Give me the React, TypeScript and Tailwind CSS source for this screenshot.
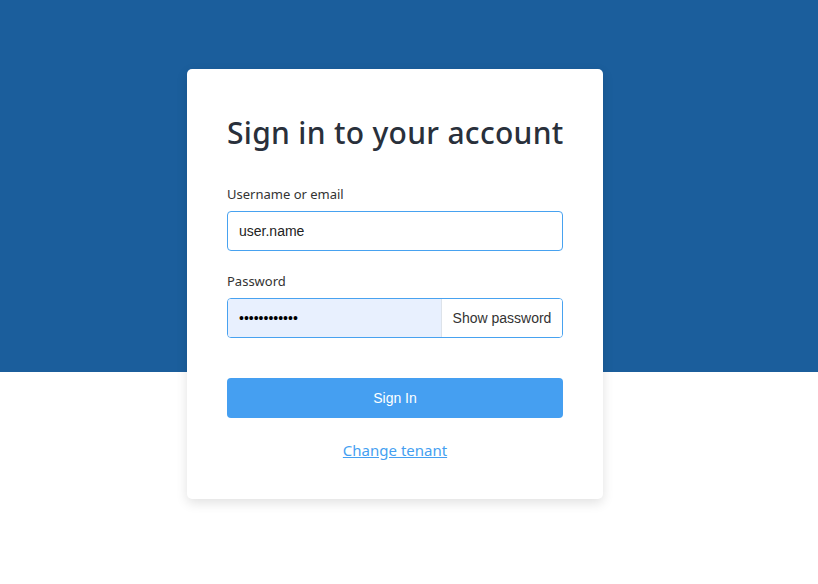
// Login page - tenant sign in
export default function App() {
  return (
    <div className="min-h-[584px] w-full bg-[linear-gradient(to_bottom,#1b5e9c_372px,#ffffff_372px)] pt-[69px]">
      <div className="ml-[187px] w-[416px] rounded-[5px] bg-white px-10 pt-10 pb-[37px] shadow-[0_4px_12px_rgba(0,0,0,0.12)]">
        <h1 className="whitespace-nowrap font-['Noto_Sans',sans-serif] text-[30px] leading-[48px] font-medium text-[#29303b] tracking-[0.3px]">
          Sign in to your account
        </h1>

        <form className="mt-[27px] flex flex-col">
          <label className="font-['Noto_Sans',sans-serif] text-[13px] leading-5 text-[#333]">
            Username or email
          </label>
          <input
            defaultValue="user.name"
            className="mt-[7px] h-10 w-full rounded-[4px] border border-[#48a2f0] bg-white px-[11px] font-['Liberation_Sans',sans-serif] text-[14px] text-[#222] outline-none"
          />

          <label className="mt-5 font-['Noto_Sans',sans-serif] text-[13px] leading-5 text-[#333]">
            Password
          </label>
          <div className="mt-[7px] flex h-10 w-full overflow-hidden rounded-[4px] border border-[#48a2f0]">
            <input
              type="password"
              defaultValue="passwordpass"
              className="min-w-0 flex-1 bg-[#e8f0fe] px-[11px] font-['Liberation_Sans',sans-serif] text-[14px] text-black outline-none"
            />
            <button
              type="button"
              className="w-[121px] border-l border-[#dde3ea] bg-white font-['Liberation_Sans',sans-serif] text-[14px] text-[#333]"
            >
              Show password
            </button>
          </div>

          <button
            type="button"
            className="mt-10 h-10 w-full rounded-[4px] bg-[#459ff1] font-['Liberation_Sans',sans-serif] text-[14px] text-white"
          >
            Sign In
          </button>

          <div className="mt-5 text-center">
            <a
              href="#"
              className="font-['Noto_Sans',sans-serif] text-[15px] leading-6 text-[#459ff1] underline"
            >
              Change tenant
            </a>
          </div>
        </form>
      </div>
    </div>
  );
}
